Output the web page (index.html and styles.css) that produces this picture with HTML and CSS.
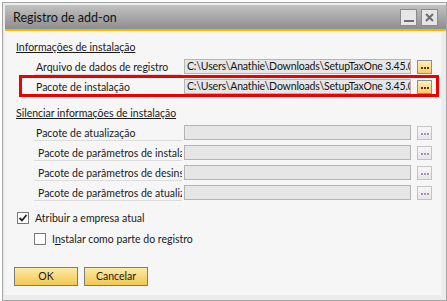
FILE: index.html
```html
<!DOCTYPE html>
<html lang="pt">
<head>
    <meta charset="UTF-8">
    <meta name="viewport" content="width=device-width, initial-scale=1.0">
    <title>Registro de add-on</title>
    <link rel="stylesheet" href="styles.css">
</head>
<body>
<div class="window">
    <div class="titlebar">
        <span class="title">Registro de add-on</span>
        <div class="win-buttons">
            <span class="win-btn minimize"><span class="bar"></span></span>
            <span class="win-btn close">
                <svg width="9" height="9" viewBox="0 0 9 9">
                    <path d="M1 1 L8 8 M8 1 L1 8" stroke="#6e6e6e" stroke-width="2"/>
                </svg>
            </span>
        </div>
    </div>

    <div class="content">
        <div class="section-title">Informações de instalação</div>
        <div class="rows">
            <div class="row">
                <span class="label">Arquivo de dados de registro</span>
                <span class="field">C:\Users\Anathie\Downloads\SetupTaxOne 3.45.0</span>
                <span class="browse"><i></i><i></i><i></i></span>
            </div>
            <div class="row marked">
                <span class="label">Pacote de instalação</span>
                <span class="field">C:\Users\Anathie\Downloads\SetupTaxOne 3.45.0</span>
                <span class="browse"><i></i><i></i><i></i></span>
            </div>
        </div>

        <div class="section-title second">Silenciar informações de instalação</div>
        <div class="rows">
            <div class="row disabled">
                <span class="label">Pacote de atualização</span>
                <span class="field"></span>
                <span class="browse"><i></i><i></i><i></i></span>
            </div>
            <div class="row disabled">
                <span class="label indent">Pacote de parâmetros de instalação</span>
                <span class="field"></span>
                <span class="browse"><i></i><i></i><i></i></span>
            </div>
            <div class="row disabled">
                <span class="label indent">Pacote de parâmetros de desinstalação</span>
                <span class="field"></span>
                <span class="browse"><i></i><i></i><i></i></span>
            </div>
            <div class="row disabled">
                <span class="label indent">Pacote de parâmetros de atualização</span>
                <span class="field"></span>
                <span class="browse"><i></i><i></i><i></i></span>
            </div>
        </div>

        <div class="check first">
            <span class="box">
                <svg width="10" height="10" viewBox="0 0 10 10">
                    <path d="M1.5 5 L4 7.5 L8.5 2" stroke="#222" stroke-width="1.8" fill="none"/>
                </svg>
            </span>
            <span>Atribuir a empresa atual</span>
        </div>
        <div class="check sub">
            <span class="box"></span>
            <span>I<u>n</u>stalar como parte do registro</span>
        </div>

        <div class="actions">
            <span class="btn">OK</span>
            <span class="btn">Cancelar</span>
        </div>
    </div>
</div>
</body>
</html>
```

FILE: styles.css
```css
body {
    margin: 0;
    background-color: #ffffff;
    font-family: Lato, "Liberation Sans", sans-serif;
    font-size: 10.5px;
    color: #1a1a1a;
}

.window {
    width: 441px;
    height: 295px;
    margin: 2px 0 0 2px;
    border: 1px solid #a4a4a4;
    background-color: #ececec;
    padding: 2px 0 0 2px;
    display: flex;
    flex-direction: column;
}

.titlebar {
    height: 24px;
    background: linear-gradient(#c2c2c2, #8e8e8e);
    border-bottom: 2px solid #f5b800;
    display: flex;
    align-items: center;
    justify-content: space-between;
    padding: 0 8px;
}

.title {
    font-size: 12.5px;
    color: #141414;
}

.win-buttons {
    display: flex;
    gap: 4px;
    margin-top: 1px;
}

.win-btn {
    width: 15px;
    height: 15px;
    border: 1px solid #8a8a8a;
    background-color: #e6e6e6;
    display: flex;
    align-items: center;
    justify-content: center;
}

.minimize {
    align-items: flex-end;
}

.minimize .bar {
    width: 10px;
    height: 2px;
    background-color: #6e6e6e;
    margin-bottom: 3px;
}

.content {
    flex: 1;
    margin: 0 5px 5px 0;
    background-color: #f6f6f6;
    padding: 9px 0 0 11px;
}

.section-title {
    text-decoration: underline;
    line-height: 14px;
    height: 14px;
}

.section-title.second {
    margin-top: 12px;
}

.rows {
    display: flex;
    flex-direction: column;
    gap: 5px;
    margin: 5px 0 0 18px;
}

.row {
    display: flex;
    align-items: center;
    height: 15px;
    position: relative;
}

.label {
    width: 146px;
    height: 14px;
    line-height: 14px;
    padding-left: 2px;
    border-bottom: 1px solid #dcdcdc;
    white-space: nowrap;
    overflow: hidden;
    margin-top: 1px;
}

.label.indent {
    padding-left: 4px;
    width: 144px;
}

.field {
    margin-left: 2px;
    width: 223px;
    height: 13px;
    line-height: 13px;
    border: 1px solid #b4b4b4;
    background-color: #e6e6e6;
    padding-left: 2px;
    white-space: nowrap;
    overflow: hidden;
    color: #141414;
    letter-spacing: -0.15px;
}

.browse {
    margin-left: 6px;
    width: 15px;
    height: 14px;
    border: 1px solid #8e8e8e;
    background: linear-gradient(#fdf0c0, #f1cf68);
    display: flex;
    justify-content: center;
    align-items: center;
    gap: 1px;
    padding-top: 2px;
    box-sizing: border-box;
}

.browse i {
    width: 2px;
    height: 2px;
    background-color: #7a2a1a;
}

.disabled .browse {
    border-color: #c4c4c4;
    background: linear-gradient(#f8f8f8, #e6e6e6);
}

.disabled .browse i {
    background-color: #b68bb0;
}

.disabled .browse i:nth-child(2) {
    background-color: #8ea0c8;
}

.marked::after {
    content: "";
    position: absolute;
    left: -15px;
    top: -4px;
    width: 414px;
    height: 16px;
    border: 3px solid #ee0000;
}

.check {
    display: flex;
    align-items: center;
    gap: 6px;
    height: 14px;
    line-height: 14px;
}

.check.first {
    margin: 11px 0 0 1px;
}

.check.sub {
    margin: 7px 0 0 18px;
}

.box {
    width: 10px;
    height: 10px;
    border: 1px solid #7a7a7a;
    background-color: #ffffff;
    display: flex;
    align-items: center;
    justify-content: center;
}

.actions {
    display: flex;
    gap: 6px;
    margin: 21px 0 0 -2px;
}

.btn {
    width: 62px;
    height: 17px;
    line-height: 17px;
    text-align: center;
    border: 1px solid #7c7c7c;
    background: linear-gradient(#fdeaa6, #f1c850);
    color: #1a1a1a;
}
```
